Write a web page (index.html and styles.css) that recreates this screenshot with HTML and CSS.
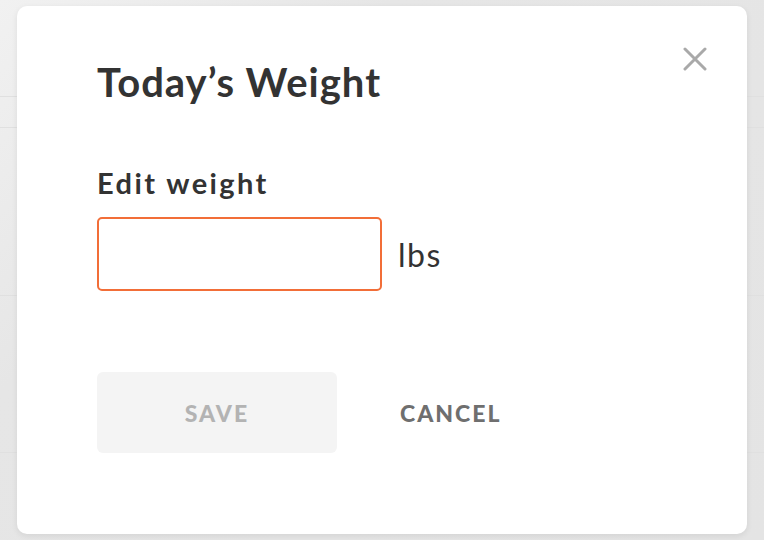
FILE: index.html
```html
<!DOCTYPE html>
<html>
<head>
  <meta charset="utf-8">
  <meta name="viewport" content="width=device-width">
  <title>Today's Weight</title>
  <link rel="stylesheet" href="styles.css">
</head>
<body>
	<div class="backdrop">
		<div class="modal">
			<button class="close" aria-label="Close">
				<svg width="24" height="24" viewBox="0 0 24 24">
					<path d="M2 2 L22 22 M22 2 L2 22" stroke="#a9a9a9" stroke-width="3" stroke-linecap="round" fill="none"/>
				</svg>
			</button>
			<h2 class="title">Today’s Weight</h2>
			<label class="label" for="weight">Edit weight</label>
			<div class="field">
				<input type="text" id="weight" class="input">
				<span class="unit">lbs</span>
			</div>
			<div class="actions">
				<button class="btn btn-save" disabled>SAVE</button>
				<button class="btn btn-cancel">CANCEL</button>
			</div>
		</div>
	</div>
</body>
</html>
```

FILE: styles.css
```css
	html, body{
		margin:0;
		height:100%;
	}
	body{
		font-family:"Lato", "Noto Sans", sans-serif;
		color:#333;
		background:#e5e5e5;
	}
	.backdrop{
		height:100%;
		box-sizing:border-box;
		padding:6px 17px;
		background:
			linear-gradient(#e0e0e0, #e0e0e0) 0 96px / 100% 1px no-repeat,
			linear-gradient(#e0e0e0, #e0e0e0) 0 127px / 100% 1px no-repeat,
			linear-gradient(#e0e0e0, #e0e0e0) 0 295px / 100% 1px no-repeat,
			linear-gradient(#e0e0e0, #e0e0e0) 0 452px / 100% 1px no-repeat,
			linear-gradient(135deg, #f1f1f1 0%, #e6e6e6 30%, #e4e4e4 100%);
	}
	.modal{
		position:relative;
		height:528px;
		box-sizing:border-box;
		padding:0 80px;
		background:#fff;
		border-radius:10px;
		box-shadow:0 2px 6px rgba(0,0,0,0.08);
	}
	.close{
		position:absolute;
		top:41px;
		right:40px;
		padding:0;
		border:none;
		background:none;
		line-height:0;
		cursor:pointer;
	}
	.title{
		margin:0;
		padding-top:56px;
		font-size:40px;
		line-height:40px;
		font-weight:700;
		letter-spacing:1px;
		color:#333;
	}
	.label{
		display:block;
		margin-top:67px;
		font-size:29px;
		line-height:28px;
		font-weight:700;
		letter-spacing:2.4px;
		color:#333;
	}
	.field{
		display:flex;
		align-items:center;
		gap:16px;
		margin-top:20px;
	}
	.input{
		width:285px;
		height:74px;
		box-sizing:border-box;
		border:2px solid #f26e38;
		border-radius:5px;
		outline:none;
		font-size:28px;
		padding:0 14px;
		font-family:inherit;
	}
	.unit{
		font-size:32px;
		letter-spacing:1.5px;
		color:#333;
	}
	.actions{
		display:flex;
		align-items:center;
		gap:63px;
		margin-top:81px;
	}
	.btn{
		font-family:inherit;
		font-size:23px;
		font-weight:900;
		letter-spacing:2px;
		border:none;
		cursor:pointer;
	}
	.btn-save{
		width:240px;
		height:81px;
		border-radius:6px;
		background:#f4f4f4;
		color:#b3b3b3;
		cursor:default;
	}
	.btn-cancel{
		padding:0;
		background:none;
		color:#6f6f6f;
	}
```
